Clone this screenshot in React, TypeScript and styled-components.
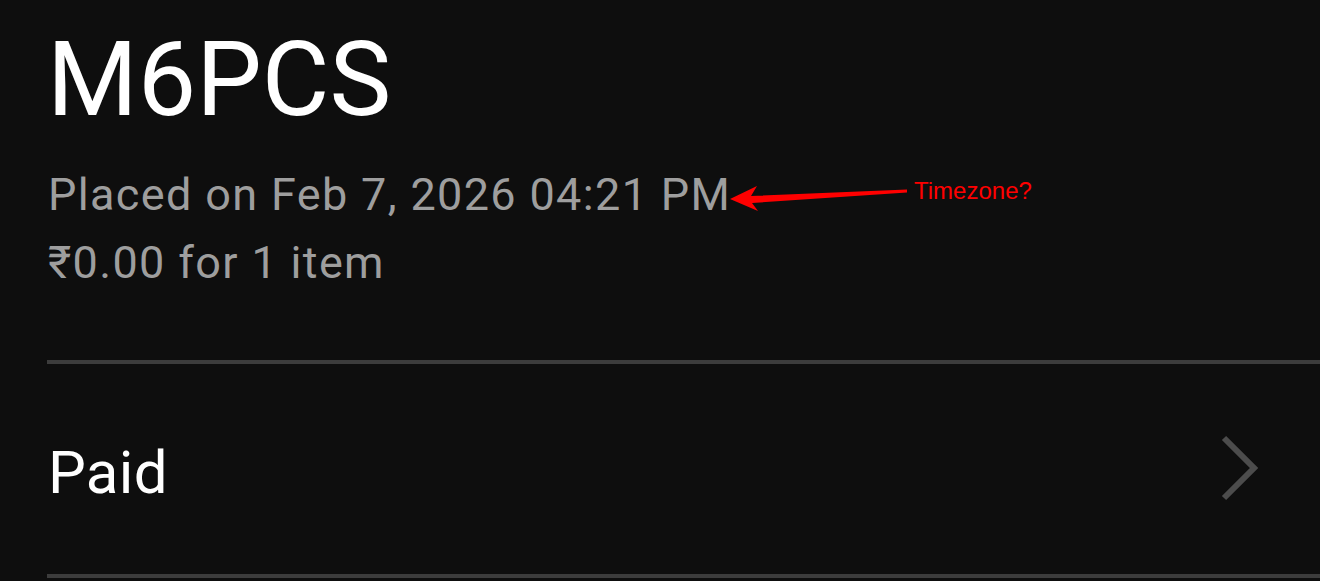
import React from "react";
import styled, { createGlobalStyle } from "styled-components";

const GlobalStyle = createGlobalStyle`
  html, body {
    margin: 0;
    padding: 0;
    background: #0e0e0e;
  }
  body {
    font-family: Roboto, "Noto Sans", "Liberation Sans", sans-serif;
    overflow: hidden;
  }
`;

const Page = styled.div`
  position: relative;
  width: 1320px;
  height: 581px;
  padding: 18px 0 0 48px;
  box-sizing: border-box;
  background: #0e0e0e;
`;

const Title = styled.h1`
  margin: 0;
  font-size: 104px;
  line-height: 123px;
  font-weight: 400;
  color: #ffffff;
  margin-left: -1px;
`;

const Meta = styled.div`
  margin-top: 20px;
  display: flex;
  flex-direction: column;
`;

const MetaLine = styled.span`
  font-size: 45px;
  line-height: 68px;
  color: #9e9e9e;
  letter-spacing: 1.35px;
  white-space: nowrap;
`;

const Divider = styled.div<{ $top?: number }>`
  height: 4px;
  background: #3c3c3c;
  margin-top: ${(p) => p.$top ?? 0}px;
  margin-left: -1px;
`;

const Row = styled.div`
  height: 210px;
  display: flex;
  align-items: center;
  justify-content: space-between;
  padding-right: 58px;
`;

const RowLabel = styled.span`
  font-size: 60px;
  color: #ffffff;
  padding-top: 6px;
  letter-spacing: 0.3px;
`;

const Chevron = styled.svg`
  display: block;
  width: 42px;
  height: 68px;
`;

const Annotation = styled.div`
  position: absolute;
  inset: 0;
  pointer-events: none;
`;

const ArrowSvg = styled.svg`
  position: absolute;
  left: 0;
  top: 0;
  width: 1320px;
  height: 581px;
`;

const Note = styled.span`
  position: absolute;
  left: 914px;
  top: 179px;
  font-family: "Liberation Sans", Arial, sans-serif;
  font-size: 24px;
  line-height: 24px;
  color: #ff0000;
  white-space: nowrap;
`;

export default function App() {
  return (
    <>
      <GlobalStyle />
      <Page>
        <Title>M6PCS</Title>
        <Meta>
          <MetaLine>Placed on Feb 7, 2026 04:21 PM</MetaLine>
          <MetaLine>₹0.00 for 1 item</MetaLine>
        </Meta>
        <Divider $top={63} />
        <Row>
          <RowLabel>Paid</RowLabel>
          <Chevron viewBox="0 0 42 68">
            <polyline
              points="4,3 34,33 4,63"
              fill="none"
              stroke="#4c4c4c"
              strokeWidth="6"
              strokeLinejoin="miter"
            />
          </Chevron>
        </Row>
        <Divider />
        <Annotation>
          <ArrowSvg viewBox="0 0 1320 581">
            <polygon
              points="730,199 757,186 751,196 907,189.5 907,192.5 752,203 758,211"
              fill="#ff0000"
            />
          </ArrowSvg>
          <Note>Timezone?</Note>
        </Annotation>
      </Page>
    </>
  );
}
